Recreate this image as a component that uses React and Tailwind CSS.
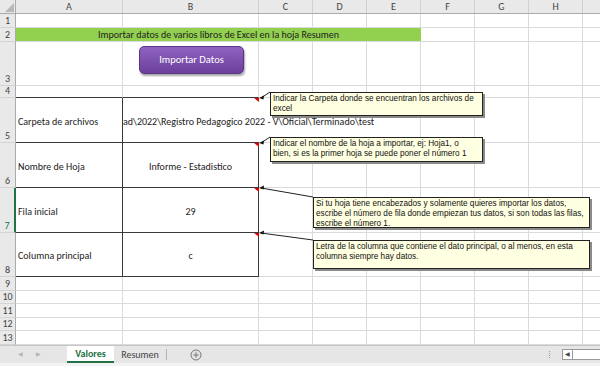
import React from "react";

const cols = [
  { key: "A", w: "w-[107px]" },
  { key: "B", w: "w-[136px]" },
  { key: "C", w: "w-[54px]" },
  { key: "D", w: "w-[54px]" },
  { key: "E", w: "w-[54px]" },
  { key: "F", w: "w-[54px]" },
  { key: "G", w: "w-[54px]" },
  { key: "H", w: "w-[54px]" },
];

const cellFont = { fontFamily: "Carlito, Lato, 'Liberation Sans', sans-serif" };
const noteFont = { fontFamily: "Tahoma, 'Liberation Sans', Arial, sans-serif" };

const RowHeader = ({ num, active }) => (
  <div
    className={`w-[16px] shrink-0 flex items-end justify-center border-b border-[#d4d4d4] bg-[#e9e9e9] text-[10px] leading-[13px] ${
      active
        ? "border-r-2 border-r-[#217346] text-[#217346]"
        : "border-r border-r-[#ababab] text-[#444]"
    }`}
  >
    {num}
  </div>
);

const Cell = ({ w, className = "", children }) => (
  <div
    className={`${w} shrink-0 flex items-center border-b border-r border-[#dadada] text-[10px] text-[#222] ${className}`}
  >
    {children}
  </div>
);

const PlainRow = ({ num, h }) => (
  <div className={`flex ${h}`}>
    <RowHeader num={num} />
    {cols.map((c) => (
      <Cell key={c.key} w={c.w} />
    ))}
    <div className="flex-1 border-b border-[#dadada]" />
  </div>
);

const TailCells = ({ from }) => (
  <>
    {cols.slice(from).map((c) => (
      <Cell key={c.key} w={c.w} />
    ))}
    <div className="flex-1 border-b border-[#dadada]" />
  </>
);

// comment box, lines kept as Excel wrapped them
const Note = ({ className, lines }) => (
  <div
    className={`absolute bg-[#ffffe1] border border-[#222] shadow-[2px_2px_0_#8a8a8a] pl-[2px] pt-[1px] text-[8.2px] leading-[10px] text-[#111] whitespace-nowrap overflow-hidden ${className}`}
    style={noteFont}
  >
    {lines.map((l) => (
      <div key={l}>{l}</div>
    ))}
  </div>
);

export default function App() {
  return (
    <div className="w-[600px] h-[366px] overflow-hidden bg-white flex flex-col" style={cellFont}>
      <div className="relative flex-1 flex flex-col">
        {/* column headers */}
        <div className="flex h-[14px] bg-[#e9e9e9] border-b border-[#ababab]">
          <div className="w-[16px] shrink-0 relative border-r border-[#ababab]">
            <div className="absolute right-[1px] bottom-[1px] w-0 h-0 border-l-[9px] border-l-transparent border-b-[9px] border-b-[#b8b8b8]" />
          </div>
          {cols.map((c) => (
            <div
              key={c.key}
              className={`${c.w} shrink-0 flex items-center justify-center border-r border-[#d0d0d0] text-[10px] text-[#444]`}
            >
              {c.key}
            </div>
          ))}
          <div className="flex-1" />
        </div>

        <PlainRow num="1" h="h-[14px]" />

        {/* row 2: title */}
        <div className="flex h-[14px]">
          <RowHeader num="2" />
          <div className="w-[405px] shrink-0 flex items-center justify-center bg-[#92d050] border-b border-[#dadada] text-[10px] text-[#222]">
            Importar datos de varios libros de Excel en la hoja Resumen
          </div>
          <TailCells from={5} />
        </div>

        {/* row 3: button */}
        <div className="flex h-[44px]">
          <RowHeader num="3" />
          <Cell w="w-[107px]" />
          <div className="w-[136px] shrink-0 flex justify-center pt-[4px] pl-[2px] border-b border-r border-[#dadada]">
            <button className="w-[105px] h-[28px] rounded-[5px] bg-gradient-to-b from-[#9063c2] to-[#6b3f9a] border border-[#5a3487] shadow-[1px_2px_2px_rgba(0,0,0,0.35)] text-white text-[10.5px]">
              Importar Datos
            </button>
          </div>
          <TailCells from={2} />
        </div>

        {/* row 4 */}
        <div className="flex h-[12px]">
          <RowHeader num="4" />
          <Cell w="w-[107px]" className="border-b-[#3a3a3a]" />
          <Cell w="w-[136px]" className="border-b-[#3a3a3a]" />
          <TailCells from={2} />
        </div>

        {/* row 5 */}
        <div className="flex h-[45px]">
          <RowHeader num="5" />
          <Cell w="w-[107px]" className="relative z-10 bg-white pl-[2px] pt-[2px] border-b-[#3a3a3a] border-r-[#3a3a3a]">
            Carpeta de archivos
          </Cell>
          <div className="w-[136px] shrink-0 flex items-center pt-[2px] border-b border-[#3a3a3a] text-[10px] text-[#222] whitespace-nowrap">
            <span className="relative z-0">ad\2022\Registro Pedagogico 2022 - V\Oficial\Terminado\test</span>
          </div>
          <div className="w-[54px] shrink-0 border-b border-[#dadada]" />
          <div className="w-[54px] shrink-0 border-b border-[#dadada]" />
          <TailCells from={4} />
        </div>

        {/* row 6 */}
        <div className="flex h-[45px]">
          <RowHeader num="6" />
          <Cell w="w-[107px]" className="pl-[2px] pt-[2px] border-b-[#3a3a3a] border-r-[#3a3a3a]">
            Nombre de Hoja
          </Cell>
          <Cell w="w-[136px]" className="justify-center pt-[2px] border-b-[#3a3a3a] border-r-[#3a3a3a]">
            Informe - Estadistico
          </Cell>
          <TailCells from={2} />
        </div>

        {/* row 7 */}
        <div className="flex h-[45px]">
          <RowHeader num="7" active />
          <Cell w="w-[107px]" className="pl-[2px] pt-[2px] border-b-[#3a3a3a] border-r-[#3a3a3a]">
            Fila inicial
          </Cell>
          <Cell w="w-[136px]" className="justify-center pt-[2px] border-b-[#3a3a3a] border-r-[#3a3a3a]">
            29
          </Cell>
          <TailCells from={2} />
        </div>

        {/* row 8 */}
        <div className="flex h-[44px]">
          <RowHeader num="8" />
          <Cell w="w-[107px]" className="pl-[2px] pt-[2px] border-b-[#3a3a3a] border-r-[#3a3a3a]">
            Columna principal
          </Cell>
          <Cell w="w-[136px]" className="justify-center pt-[2px] border-b-[#3a3a3a] border-r-[#3a3a3a]">
            c
          </Cell>
          <TailCells from={2} />
        </div>

        <PlainRow num="9" h="h-[14px]" />
        <PlainRow num="10" h="h-[13px]" />
        <PlainRow num="11" h="h-[14px]" />
        <PlainRow num="12" h="h-[13px]" />
        <PlainRow num="13" h="h-[14px]" />

        {/* comment connectors and red markers */}
        <svg className="absolute inset-0 pointer-events-none z-20" width="600" height="345">
          {[
            [98, 270, 92],
            [143, 270, 137],
            [188, 313, 197],
            [233, 313, 240],
          ].map(([y, x2, y2]) => (
            <g key={y}>
              <polygon points={`254,${y} 259,${y} 259,${y + 4}`} fill="#e00000" />
              <line x1="261" y1={y} x2={x2} y2={y2} stroke="#222" strokeWidth="1" />
              <polygon points={`259,${y} 264,${y - 2.5} 263.5,${y + 1.5}`} fill="#111" />
            </g>
          ))}
        </svg>

        <Note
          className="left-[270px] top-[92px] w-[213px] h-[24px] z-30"
          lines={["Indicar la Carpeta donde se encuentran los archivos de", "excel"]}
        />
        <Note
          className="left-[270px] top-[137px] w-[213px] h-[25px] z-30"
          lines={[
            "Indicar el nombre de la hoja a importar, ej: Hoja1, o",
            "bien, si es la primer hoja se puede poner el número 1",
          ]}
        />
        <Note
          className="left-[313px] top-[197px] w-[277px] h-[31px] z-30"
          lines={[
            "Si tu hoja tiene encabezados y solamente quieres importar los datos,",
            "escribe el número de fila donde empiezan tus datos, si son todas las filas,",
            "escribe el número 1.",
          ]}
        />
        <Note
          className="left-[313px] top-[240px] w-[277px] h-[29px] z-30"
          lines={[
            "Letra de la columna que contiene el dato principal, o al menos, en esta",
            "columna siempre hay datos.",
          ]}
        />
      </div>

      {/* sheet tabs */}
      <div className="h-[18px] shrink-0 flex items-stretch bg-[#e6e6e6] border-t border-[#c6c6c6] text-[10px]">
        <div className="w-[67px] flex items-center gap-[13px] pl-[18px] text-[6px] text-[#b5b5b5]">
          <span>◀</span>
          <span>▶</span>
        </div>
        <div className="w-[47px] flex items-center justify-center bg-white border-b-2 border-[#217346] font-bold text-[#217346]">
          Valores
        </div>
        <div className="w-[52px] flex items-center justify-center text-[#444]">Resumen</div>
        <div className="w-px my-[3px] bg-[#b5b5b5]" />
        <div className="w-[58px] flex items-center justify-center">
          <svg width="12" height="12" viewBox="0 0 12 12">
            <circle cx="6" cy="6" r="5" fill="none" stroke="#777" strokeWidth="1" />
            <path d="M6 3.2v5.6M3.2 6h5.6" stroke="#777" strokeWidth="1" />
          </svg>
        </div>
        <div className="flex-1" />
        <div className="w-[10px] flex flex-col items-center justify-center gap-[1px]">
          <span className="w-[1px] h-[1px] bg-[#999]" />
          <span className="w-[1px] h-[1px] bg-[#999]" />
          <span className="w-[1px] h-[1px] bg-[#999]" />
          <span className="w-[1px] h-[1px] bg-[#999]" />
        </div>
        <div className="w-[8px]" />
        <div className="w-[38px] my-[3px] flex bg-white border border-[#9a9a9a] border-r-0">
          <div className="w-[10px] flex items-center justify-center border-r border-[#9a9a9a] text-[6px] text-[#444]">
            ◀
          </div>
        </div>
      </div>
      <div className="h-[3px] shrink-0 bg-[#f3f3f3]" />
    </div>
  );
}
